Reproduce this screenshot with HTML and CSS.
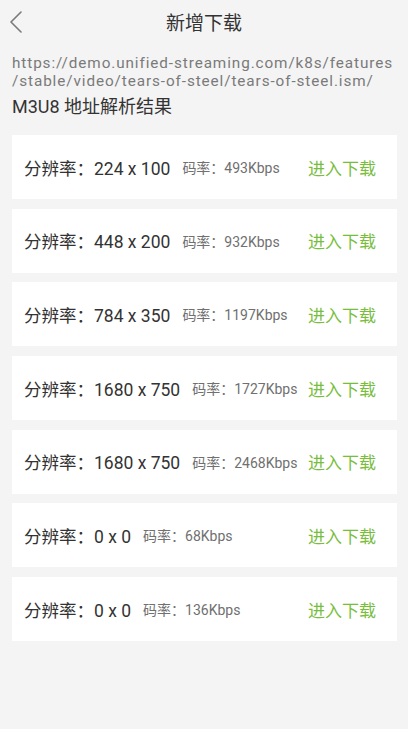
FILE: index.html
```html
<!DOCTYPE html>
<html lang="zh">
<head>
<meta charset="utf-8">
<title>新增下载</title>
<link rel="stylesheet" href="styles.css">
</head>
<body>
<div class="page">
  <header class="nav">
    <span class="back">
      <svg width="14" height="22" viewBox="0 0 14 22"><path d="M12 1 L2 11 L12 21" fill="none" stroke="#7a7a7a" stroke-width="1.6" stroke-linecap="round" stroke-linejoin="round"/></svg>
    </span>
    <h1 class="title">新增下载</h1>
  </header>
  <p class="url">https://demo.unified-streaming.com/k8s/features<br>/stable/video/tears-of-steel/tears-of-steel.ism/</p>
  <p class="section">M3U8 地址解析结果</p>
  <ul class="list">
    <li class="card"><span class="res">分辨率：224 x 100</span><span class="rate">码率：493Kbps</span><span class="go">进入下载</span></li>
    <li class="card"><span class="res">分辨率：448 x 200</span><span class="rate">码率：932Kbps</span><span class="go">进入下载</span></li>
    <li class="card"><span class="res">分辨率：784 x 350</span><span class="rate">码率：1197Kbps</span><span class="go">进入下载</span></li>
    <li class="card"><span class="res">分辨率：1680 x 750</span><span class="rate">码率：1727Kbps</span><span class="go">进入下载</span></li>
    <li class="card"><span class="res">分辨率：1680 x 750</span><span class="rate">码率：2468Kbps</span><span class="go">进入下载</span></li>
    <li class="card"><span class="res">分辨率：0 x 0</span><span class="rate">码率：68Kbps</span><span class="go">进入下载</span></li>
    <li class="card"><span class="res">分辨率：0 x 0</span><span class="rate">码率：136Kbps</span><span class="go">进入下载</span></li>
  </ul>
</div>
</body>
</html>
```
FILE: styles.css
```css
html, body {
  margin: 0;
  padding: 0;
  background: #f4f4f4;
}
body {
  font-family: Roboto, "Noto Sans CJK SC", sans-serif;
  color: #333;
}
.page {
  width: 408px;
  min-height: 729px;
}
.nav {
  position: relative;
  height: 42px;
  display: flex;
  align-items: center;
  justify-content: center;
}
.back {
  position: absolute;
  left: 9px;
  top: 11px;
  display: flex;
}
.title {
  margin: 0;
  font-size: 19px;
  font-weight: normal;
  color: #333;
}
.url {
  margin: 12px 12px 0;
  font-size: 15.3px;
  line-height: 18px;
  letter-spacing: 0.9px;
  color: #7a7a7a;
  white-space: nowrap;
}
.section {
  margin: 5px 12px 0;
  font-size: 18px;
  line-height: 24px;
  color: #333;
}
.list {
  list-style: none;
  margin: 16px 0 0;
  padding: 0 11px 0 12px;
  display: flex;
  flex-direction: column;
  gap: 9.7px;
}
.card {
  background: #fff;
  height: 64px;
  display: flex;
  align-items: center;
  padding: 0 21px 0 12px;
}
.res {
  font-size: 17.5px;
  color: #333;
}
.rate {
  margin-left: 12px;
  font-size: 14px;
  color: #707070;
}
.go {
  margin-left: auto;
  font-size: 17px;
  color: #78bd3c;
}
```
